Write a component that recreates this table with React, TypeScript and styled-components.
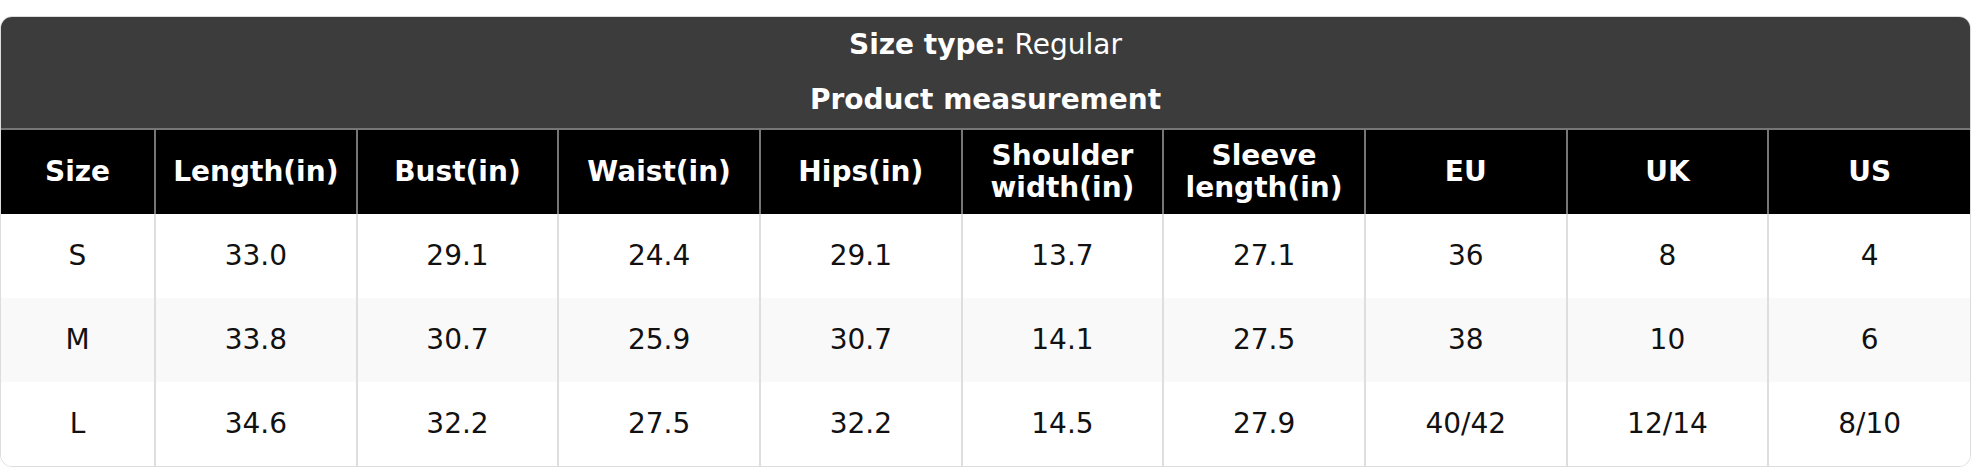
import styled, { createGlobalStyle } from 'styled-components';

const GlobalStyle = createGlobalStyle`
  html,
  body {
    margin: 0;
    padding: 0;
    background: #ffffff;
  }

  body {
    font-family: 'DejaVu Sans', 'Liberation Sans', sans-serif;
  }

  *,
  *::before,
  *::after {
    box-sizing: border-box;
  }
`;

interface SizeRow {
  size: string;
  values: string[];
}

const columns = [
  'Size',
  'Length(in)',
  'Bust(in)',
  'Waist(in)',
  'Hips(in)',
  'Shoulder width(in)',
  'Sleeve length(in)',
  'EU',
  'UK',
  'US',
];

const rows: SizeRow[] = [
  { size: 'S', values: ['33.0', '29.1', '24.4', '29.1', '13.7', '27.1', '36', '8', '4'] },
  { size: 'M', values: ['33.8', '30.7', '25.9', '30.7', '14.1', '27.5', '38', '10', '6'] },
  { size: 'L', values: ['34.6', '32.2', '27.5', '32.2', '14.5', '27.9', '40/42', '12/14', '8/10'] },
];

export default function App() {
  return (
    <>
      <GlobalStyle />
      <Page>
        <Card>
          <Caption>
            <CaptionLine>
              <strong>Size type:</strong> Regular
            </CaptionLine>
            <CaptionTitle>Product measurement</CaptionTitle>
          </Caption>
          <Table>
            <colgroup>
              <col style={{ width: 154 }} />
              {columns.slice(1).map((c) => (
                <col key={c} />
              ))}
            </colgroup>
            <thead>
              <tr>
                {columns.map((c) => (
                  <HeadCell key={c}>{c}</HeadCell>
                ))}
              </tr>
            </thead>
            <tbody>
              {rows.map((row, i) => (
                <BodyRow key={row.size} $striped={i % 2 === 1}>
                  <BodyCell>{row.size}</BodyCell>
                  {row.values.map((v, j) => (
                    <BodyCell key={j}>{v}</BodyCell>
                  ))}
                </BodyRow>
              ))}
            </tbody>
          </Table>
        </Card>
      </Page>
    </>
  );
}

const Page = styled.div`
  padding-top: 16px;
  width: 1972px;
`;

const Card = styled.div`
  width: 1971px;
  border: 1px solid #dcdcdc;
  border-radius: 12px;
  overflow: hidden;
  background: #ffffff;
`;

const Caption = styled.div`
  display: flex;
  flex-direction: column;
  align-items: center;
  gap: 23px;
  padding: 12px 0 12px;
  background: #3c3c3c;
  color: #ffffff;
  font-size: 28px;
  line-height: 32px;
`;

const CaptionLine = styled.div`
  font-weight: normal;

  strong {
    font-weight: bold;
  }
`;

const CaptionTitle = styled.div`
  font-weight: bold;
`;

const Table = styled.table`
  width: 100%;
  table-layout: fixed;
  border-collapse: collapse;
  font-size: 28px;
  line-height: 32px;
`;

const HeadCell = styled.th`
  height: 85px;
  padding: 0 16px;
  background: #000000;
  color: #ffffff;
  font-weight: bold;
  text-align: center;
  vertical-align: middle;
  border: 2px solid #767676;
  border-bottom: none;

  &:first-child {
    border-left: none;
  }

  &:last-child {
    border-right: none;
  }
`;

const BodyRow = styled.tr<{ $striped: boolean }>`
  background: ${({ $striped }) => ($striped ? '#f9f9f9' : '#ffffff')};
`;

const BodyCell = styled.td`
  height: 84px;
  padding: 0 16px;
  color: #111111;
  text-align: center;
  vertical-align: middle;
  border-left: 2px solid #dedede;
  border-right: 2px solid #dedede;

  &:first-child {
    border-left: none;
  }

  &:last-child {
    border-right: none;
  }
`;
